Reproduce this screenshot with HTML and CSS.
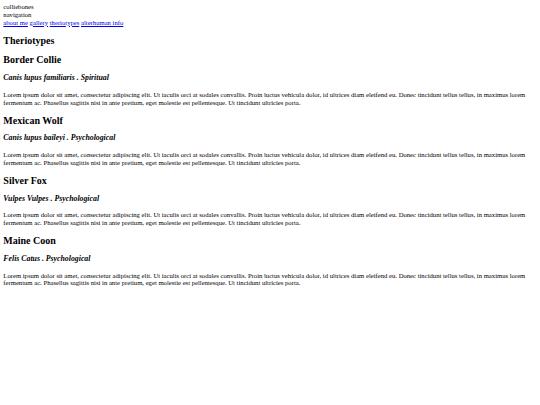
FILE: index.html
```html
<!DOCTYPE html>
<html>
<head>
<meta charset="utf-8">
<title>colliebones</title>
<link rel="stylesheet" href="styles.css">
</head>
<body class="page">
<div class="site-title">colliebones</div>
<div class="nav-label">navigation</div>
<div class="nav-links"><a class="nav-link" href="#">about me</a> <a class="nav-link" href="#">gallery</a> <a class="nav-link" href="#">theriotypes</a> <a class="nav-link" href="#">alterhuman info</a></div>
<h2 class="page-heading">Theriotypes</h2>

<h2 class="type-name">Border Collie</h2>
<h3 class="type-sub"><i>Canis lupus familiaris</i> . Spiritual</h3>
<p class="type-text">Lorem ipsum dolor sit amet, consectetur adipiscing elit. Ut iaculis orci at sodales convallis. Proin luctus vehicula dolor, id ultrices diam eleifend eu. Donec tincidunt tellus tellus, in maximus lorem fermentum ac. Phasellus sagittis nisi in ante pretium, eget molestie est pellentesque. Ut tincidunt ultricies porta.</p>

<h2 class="type-name">Mexican Wolf</h2>
<h3 class="type-sub"><i>Canis lupus baileyi</i> . Psychological</h3>
<p class="type-text">Lorem ipsum dolor sit amet, consectetur adipiscing elit. Ut iaculis orci at sodales convallis. Proin luctus vehicula dolor, id ultrices diam eleifend eu. Donec tincidunt tellus tellus, in maximus lorem fermentum ac. Phasellus sagittis nisi in ante pretium, eget molestie est pellentesque. Ut tincidunt ultricies porta.</p>

<h2 class="type-name">Silver Fox</h2>
<h3 class="type-sub"><i>Vulpes Vulpes</i> . Psychological</h3>
<p class="type-text">Lorem ipsum dolor sit amet, consectetur adipiscing elit. Ut iaculis orci at sodales convallis. Proin luctus vehicula dolor, id ultrices diam eleifend eu. Donec tincidunt tellus tellus, in maximus lorem fermentum ac. Phasellus sagittis nisi in ante pretium, eget molestie est pellentesque. Ut tincidunt ultricies porta.</p>

<h2 class="type-name">Maine Coon</h2>
<h3 class="type-sub"><i>Felis Catus</i> . Psychological</h3>
<p class="type-text">Lorem ipsum dolor sit amet, consectetur adipiscing elit. Ut iaculis orci at sodales convallis. Proin luctus vehicula dolor, id ultrices diam eleifend eu. Donec tincidunt tellus tellus, in maximus lorem fermentum ac. Phasellus sagittis nisi in ante pretium, eget molestie est pellentesque. Ut tincidunt ultricies porta.</p>
</body>
</html>
```
FILE: styles.css
```css
.page {
  margin: 3.333px;
  font-family: "Liberation Serif", "Times New Roman", serif;
  font-size: 6.667px;
  line-height: 1.15;
  color: #000;
  background: #fff;
}
.nav-link {
  color: #0000ee;
  text-decoration: underline;
}
.page-heading,
.type-name {
  font-size: 1.5em;
  font-weight: bold;
  margin: 0.83em 0;
}
.type-sub {
  font-size: 1.17em;
  font-weight: bold;
  font-style: italic;
  margin: 1em 0;
}
.type-text {
  margin: 1em 0;
}
```
